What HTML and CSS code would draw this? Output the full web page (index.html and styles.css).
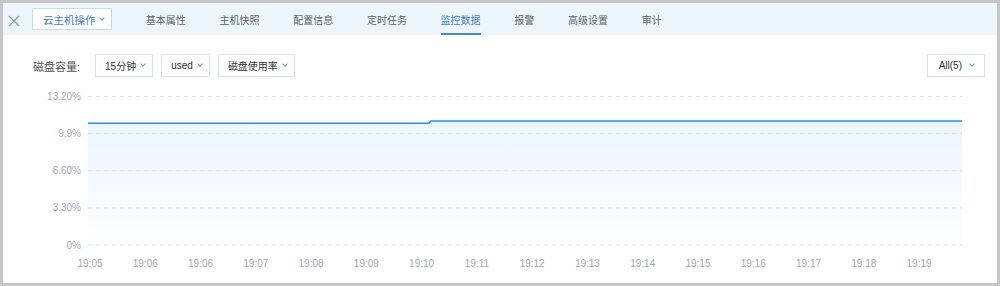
FILE: index.html
```html
<!DOCTYPE html>
<html lang="zh-CN">
<head>
  <meta charset="UTF-8" />
  <title>监控数据</title>
  <link rel="stylesheet" href="styles.css">
</head>
<body>
  <div class="panel">
    <div class="tabbar">
      <span class="close">
        <svg width="12" height="12" viewBox="0 0 12 12"><path d="M1 1L11 11M11 1L1 11" stroke="#8e96a3" stroke-width="1.2" fill="none"/></svg>
      </span>
      <div class="ops">云主机操作 <i class="arrow"></i></div>
      <ul class="tabs">
        <li>基本属性</li>
        <li>主机快照</li>
        <li>配置信息</li>
        <li>定时任务</li>
        <li class="active">监控数据</li>
        <li>报警</li>
        <li>高级设置</li>
        <li>审计</li>
      </ul>
    </div>

    <div class="toolbar">
      <span class="label">磁盘容量:</span>
      <div class="select">15分钟 <i class="arrow"></i></div>
      <div class="select">used <i class="arrow"></i></div>
      <div class="select">磁盘使用率 <i class="arrow"></i></div>
      <div class="select all">All(5) <i class="arrow"></i></div>
    </div>

    <svg class="chart" id="chart" width="994" height="200" viewBox="0 0 994 200">
      <defs>
        <linearGradient id="fill" x1="0" y1="0" x2="0" y2="1">
          <stop offset="0" stop-color="#ecf5fe"/>
          <stop offset="1" stop-color="#fdfeff"/>
        </linearGradient>
      </defs>
      <polygon points="85,40.3 426,40.3 428,38 959,38 959,162 85,162" fill="url(#fill)"/>
      <g id="grid"></g>
      <polyline points="85,40.3 426,40.3 428,38 959,38" fill="none" stroke="#2a8ff4" stroke-width="1.6"/>
      <g id="ylabels"></g>
      <g id="xlabels"></g>
    </svg>
  </div>

  <script>
    const ns = 'http://www.w3.org/2000/svg';
    const grid = document.getElementById('grid');
    const ylabels = document.getElementById('ylabels');
    const xlabels = document.getElementById('xlabels');

    const yTicks = ['13.20%', '9.9%', '6.60%', '3.30%', '0%'];
    yTicks.forEach((t, i) => {
      const y = 13.5 + i * 37.125;
      const line = document.createElementNS(ns, 'line');
      line.setAttribute('x1', 85);
      line.setAttribute('x2', 959);
      line.setAttribute('y1', y);
      line.setAttribute('y2', y);
      line.setAttribute('class', 'gridline');
      grid.appendChild(line);

      const text = document.createElementNS(ns, 'text');
      text.setAttribute('x', 78);
      text.setAttribute('y', y + 3.5);
      text.setAttribute('text-anchor', 'end');
      text.textContent = t;
      ylabels.appendChild(text);
    });

    const xTicks = ['19:05', '19:06', '19:06', '19:07', '19:08', '19:09', '19:10', '19:11',
      '19:12', '19:13', '19:14', '19:15', '19:16', '19:17', '19:18', '19:19'];
    xTicks.forEach((t, i) => {
      const text = document.createElementNS(ns, 'text');
      text.setAttribute('x', 87 + i * 55.27);
      text.setAttribute('y', 184);
      text.setAttribute('text-anchor', 'middle');
      text.textContent = t;
      xlabels.appendChild(text);
    });
  </script>
</body>
</html>
```

FILE: styles.css
```css
body {
  margin: 0;
  padding: 3px;
  background: #c6c6c6;
  font-family: 'Liberation Sans', 'Noto Sans CJK SC', sans-serif;
}

.panel {
  width: 994px;
  height: 280px;
  background: #fff;
  overflow: hidden;
}

.tabbar {
  display: flex;
  align-items: center;
  height: 32px;
  padding-left: 5px;
  background: #eef6fd;
}

.close {
  display: flex;
  width: 12px;
  height: 12px;
  margin-top: 3px;
}

.ops {
  display: flex;
  align-items: center;
  box-sizing: border-box;
  height: 22px;
  margin-left: 12px;
  padding: 0 7px 0 10px;
  border: 1px solid #c9dbef;
  background: #fff;
  color: #3d7cc2;
  font-size: 10.5px;
  gap: 4px;
}

.arrow {
  display: inline-block;
  width: 3px;
  height: 3px;
  margin-top: -3px;
  border-right: 1px solid #6a9bd6;
  border-bottom: 1px solid #6a9bd6;
  transform: rotate(45deg);
}

.tabs {
  display: flex;
  height: 100%;
  margin: 0 0 0 17.5px;
  padding: 0;
  list-style: none;
}

.tabs li {
  display: flex;
  align-items: center;
  padding: 0 16.85px;
  font-size: 10px;
  color: #5a5f69;
  position: relative;
}

.tabs li.active {
  color: #3a7fcf;
}

.tabs li.active::after {
  content: '';
  position: absolute;
  left: 16.85px;
  right: 16.85px;
  bottom: 0;
  height: 2px;
  background: #3a8ee6;
}

.toolbar {
  display: flex;
  align-items: center;
  height: 23px;
  padding: 19px 12px 0 30px;
  margin-bottom: 6px;
  gap: 8px;
}

.label {
  font-size: 11px;
  color: #4f5560;
  margin-right: 7px;
}

.select {
  display: flex;
  align-items: center;
  box-sizing: border-box;
  height: 23px;
  padding: 0 7px 0 9px;
  border: 1px solid #dfe3ea;
  font-size: 10px;
  color: #333;
  gap: 5px;
}

.select.all {
  margin-left: auto;
  padding: 0 10px 0 11px;
  gap: 8px;
}

.chart {
  display: block;
}

.chart text {
  font-size: 10px;
  fill: #9fa8b7;
}

.gridline {
  stroke: #dde2ea;
  stroke-width: 1;
  stroke-dasharray: 4 4;
}
```
